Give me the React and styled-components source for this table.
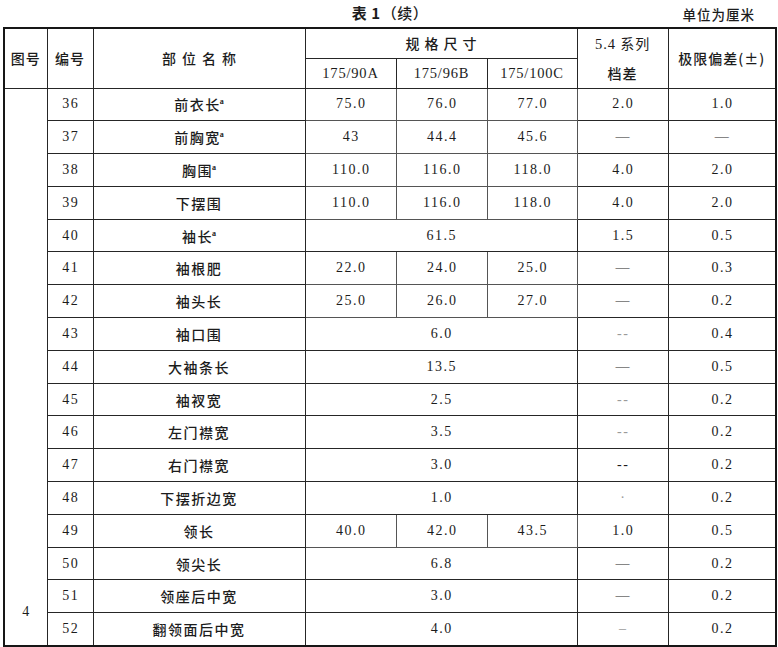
import React from "react";
import styled, { createGlobalStyle } from "styled-components";

const GlobalStyle = createGlobalStyle`
    html, body {
        margin: 0;
        padding: 0;
        background: #ffffff;
        overflow: hidden;
    }
    body {
        font-family: "Noto Sans CJK SC", "Noto Sans", sans-serif;
        color: #1c1c1c;
    }
`;

const rows = [
    { no: 36, name: "前衣长", sup: true, sizes: ["75.0", "76.0", "77.0"], grade: "2.0", tol: "1.0" },
    { no: 37, name: "前胸宽", sup: true, sizes: ["43", "44.4", "45.6"], grade: "—", tol: "—" },
    { no: 38, name: "胸围", sup: true, sizes: ["110.0", "116.0", "118.0"], grade: "4.0", tol: "2.0" },
    { no: 39, name: "下摆围", sizes: ["110.0", "116.0", "118.0"], grade: "4.0", tol: "2.0" },
    { no: 40, name: "袖长", sup: true, sizes: "61.5", grade: "1.5", tol: "0.5" },
    { no: 41, name: "袖根肥", sizes: ["22.0", "24.0", "25.0"], grade: "—", tol: "0.3" },
    { no: 42, name: "袖头长", sizes: ["25.0", "26.0", "27.0"], grade: "—", tol: "0.2" },
    { no: 43, name: "袖口围", sizes: "6.0", grade: "--", faint: true, tol: "0.4" },
    { no: 44, name: "大袖条长", sizes: "13.5", grade: "—", tol: "0.5" },
    { no: 45, name: "袖衩宽", sizes: "2.5", grade: "--", faint: true, tol: "0.2" },
    { no: 46, name: "左门襟宽", sizes: "3.5", grade: "--", faint: true, tol: "0.2" },
    { no: 47, name: "右门襟宽", sizes: "3.0", grade: "--", tol: "0.2" },
    { no: 48, name: "下摆折边宽", sizes: "1.0", grade: "·", faint: true, tol: "0.2" },
    { no: 49, name: "领长", sizes: ["40.0", "42.0", "43.5"], grade: "1.0", tol: "0.5" },
    { no: 50, name: "领尖长", sizes: "6.8", grade: "—", tol: "0.2" },
    { no: 51, name: "领座后中宽", sizes: "3.0", grade: "—", tol: "0.2" },
    { no: 52, name: "翻领面后中宽", sizes: "4.0", grade: "–", faint: true, tol: "0.2" },
];

const App = () => {
    return (
        <Page>
            <GlobalStyle />
            <Caption>
                <span />
                <Title>
                    表 1<Cont>（续）</Cont>
                </Title>
                <Unit>单位为厘米</Unit>
            </Caption>
            <Table>
                <colgroup>
                    <col style={{ width: 43 }} />
                    <col style={{ width: 46 }} />
                    <col style={{ width: 212 }} />
                    <col style={{ width: 91 }} />
                    <col style={{ width: 91 }} />
                    <col style={{ width: 90 }} />
                    <col style={{ width: 91 }} />
                    <col style={{ width: 108 }} />
                </colgroup>
                <thead>
                    <HeadRow>
                        <HeadCell rowSpan={2}>图号</HeadCell>
                        <HeadCell rowSpan={2}>编号</HeadCell>
                        <HeadCell rowSpan={2} $spread={6}>部位名称</HeadCell>
                        <HeadCell colSpan={3} $spread={5}>规格尺寸</HeadCell>
                        <HeadCell rowSpan={2}>
                            <GradeTop>
                                <Digits>5.4</Digits> 系列
                            </GradeTop>
                            <div>档差</div>
                        </HeadCell>
                        <HeadCell rowSpan={2}>极限偏差(±)</HeadCell>
                    </HeadRow>
                    <HeadRow>
                        <SizeHead>175/90A</SizeHead>
                        <SizeHead>175/96B</SizeHead>
                        <SizeHead>175/100C</SizeHead>
                    </HeadRow>
                </thead>
                <tbody>
                    {rows.map((r, i) => (
                        <BodyRow key={r.no}>
                            {i === 0 && <FigCell rowSpan={rows.length}>4</FigCell>}
                            <Num>{r.no}</Num>
                            <Name>
                                {r.name}
                                {r.sup && <Sup>a</Sup>}
                            </Name>
                            {Array.isArray(r.sizes) ? (
                                r.sizes.map((s, k) => <Num key={k} $inner>{s}</Num>)
                            ) : (
                                <Num colSpan={3}>{r.sizes}</Num>
                            )}
                            <Num $faint={r.faint}>{r.grade}</Num>
                            <Num>{r.tol}</Num>
                        </BodyRow>
                    ))}
                </tbody>
            </Table>
        </Page>
    );
};

const Page = styled.div`
    width: 778px;
    height: 647px;
    padding-left: 3px;
    box-sizing: border-box;
    overflow: hidden;
`;

const Caption = styled.div`
    display: grid;
    grid-template-columns: 1fr auto 1fr;
    align-items: center;
    width: 772px;
    height: 27px;
`;

const Title = styled.div`
    font-size: 15px;
    font-weight: 700;
    letter-spacing: 0.5px;
    margin-left: 2px;
    margin-top: -2px;
`;

const Cont = styled.span`
    font-weight: 500;
    margin-left: 1px;
`;

const Unit = styled.div`
    justify-self: end;
    margin-right: 20px;
    font-size: 13.5px;
    font-weight: 500;
    letter-spacing: 1px;
`;

const Table = styled.table`
    width: 772px;
    table-layout: fixed;
    border-collapse: collapse;
    border: 2px solid #161616;
`;

const HeadRow = styled.tr`
    height: 30px;
`;

const HeadCell = styled.th`
    border: 1px solid #262626;
    padding: 0;
    font-size: 14px;
    font-weight: 500;
    text-align: center;
    vertical-align: middle;
    line-height: 18px;
    letter-spacing: ${(p) => (p.$spread ? `${p.$spread}px` : "1px")};
    text-indent: ${(p) => (p.$spread ? `${p.$spread}px` : "0")};
    white-space: nowrap;
`;

const GradeTop = styled.div`
    font-weight: 400;
    letter-spacing: 1px;
    margin-bottom: 11px;
`;

const Digits = styled.span`
    font-family: "Liberation Serif", "Times New Roman", serif;
    font-size: 14.5px;
`;

const SizeHead = styled.th`
    border: 1px solid #262626;
    padding: 0;
    font-family: "Liberation Serif", "Times New Roman", serif;
    font-size: 14.5px;
    font-weight: 400;
    letter-spacing: 0.8px;
    text-align: center;
    vertical-align: middle;
`;

const BodyRow = styled.tr`
    height: 32.8px;
`;

const Num = styled.td`
    border: 1px solid ${(p) => (p.$inner ? "#555555" : "#262626")};
    padding: 0;
    text-align: center;
    vertical-align: middle;
    font-family: "Liberation Serif", "Times New Roman", serif;
    font-size: 14px;
    letter-spacing: 1.5px;
    text-indent: 1.5px;
    color: ${(p) => (p.$faint ? "#9a9a9a" : "#1c1c1c")};
`;

const Name = styled.td`
    border: 1px solid #262626;
    padding: 0;
    text-align: center;
    vertical-align: middle;
    font-size: 14px;
    font-weight: 500;
    letter-spacing: 1.5px;
`;

const Sup = styled.sup`
    font-family: "Liberation Serif", serif;
    font-size: 8px;
    font-weight: 700;
    letter-spacing: 0;
    vertical-align: 6px;
    margin-left: -1px;
`;

const FigCell = styled.td`
    border: 1px solid #262626;
    padding: 0 0 25px 0;
    text-align: center;
    vertical-align: bottom;
    font-family: "Liberation Serif", "Times New Roman", serif;
    font-size: 14px;
    line-height: 16px;
`;

export default App;
